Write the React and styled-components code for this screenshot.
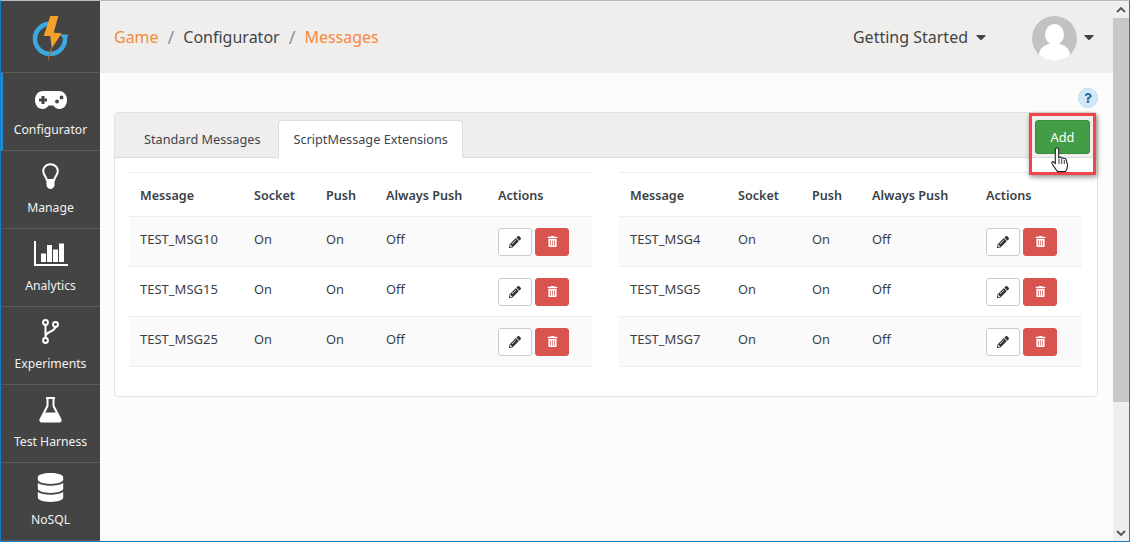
import React from "react";
import styled, { createGlobalStyle } from "styled-components";
import { FaDatabase, FaPencilAlt, FaTrashAlt, FaQuestion, FaCaretDown } from "react-icons/fa";

const leftRows = ["TEST_MSG10", "TEST_MSG15", "TEST_MSG25"];
const rightRows = ["TEST_MSG4", "TEST_MSG5", "TEST_MSG7"];
const leftCols = [114, 72, 60, 112];
const rightCols = [108, 74, 60, 114];

const GlobalStyle = createGlobalStyle`
  html, body {
    margin: 0;
    padding: 0;
    overflow: hidden;
  }
  body {
    font-family: "Noto Sans", "Open Sans", sans-serif;
    color: #3a3f47;
  }
`;

const Logo = () => (
  <svg width="40" height="46" viewBox="0 0 40 46">
    <path d="M21 8A15 15 0 1 0 34 23" fill="none" stroke="#3ba9e0" strokeWidth="4.5" />
    <path d="M29 18.500h8.500L34.500 26z" fill="#3ba9e0" />
    <path d="M20.500 32L17 44" stroke="#a86a2a" strokeWidth="1.200" />
    <path d="M19.300 0L12.700 20h6.600l1.400 12.300 10-15-8-.6L27.300 0z" fill="#f5a02a" />
  </svg>
);

const GamepadIcon = () => (
  <svg width="32" height="18" viewBox="0 0 32 18">
    <path
      d="M8 0h16c5 0 8 4 8 9s-3 9-7.500 9c-3 0-4.500-1.500-6-3.500h-5C12 16.500 10.500 18 7.500 18 3 18 0 14 0 9s3-9 8-9z"
      fill="#fff"
    />
    <path d="M6.500 7.500V5h3v2.500H12v3H9.500V13h-3v-2.500H4v-3z" fill="#444" />
    <circle cx="22" cy="10.500" r="1.900" fill="#444" />
    <circle cx="26.500" cy="6.500" r="1.900" fill="#444" />
  </svg>
);

const BulbIcon = () => (
  <svg width="17" height="26" viewBox="0 0 17 26">
    <path
      d="M8.500 1.200C4.300 1.200 1.200 4.300 1.200 8c0 3.800 3 5.500 3.600 9h7.400c.6-3.500 3.600-5.200 3.600-9 0-3.700-3.100-6.800-7.300-6.800z"
      fill="none"
      stroke="#fff"
      strokeWidth="2"
    />
    <path d="M4.500 17.500h8V22c0 2-2 4-4 4s-4-2-4-4z" fill="#fff" />
  </svg>
);

const ChartIcon = () => (
  <svg width="34" height="25" viewBox="0 0 34 25" fill="#fff">
    <path d="M0 0h2v23h32v2H0z" />
    <path d="M7 12.500h5V21H7zM13 4h5v17h-5zM19 8.500h5V21h-5zM25 2.500h5V21h-5z" />
  </svg>
);

const BranchIcon = () => (
  <svg width="17" height="25" viewBox="0 0 17 25" fill="none" stroke="#fff" strokeWidth="2">
    <circle cx="3.500" cy="3.500" r="2.400" />
    <circle cx="3.500" cy="21.500" r="2.400" />
    <circle cx="13.500" cy="5.500" r="2.400" />
    <path d="M3.500 6v13M3.500 17c1-5 9-3.500 10-9.500" />
  </svg>
);

const FlaskIcon = () => (
  <svg width="25" height="26" viewBox="0 0 25 26">
    <path d="M8 1h9" stroke="#fff" strokeWidth="2" />
    <path d="M9.500 1v8L2.500 22.500c-.5 1.200 0 2 1.200 2h17.600c1.200 0 1.700-.8 1.200-2L15.500 9V1" fill="none" stroke="#fff" strokeWidth="2" />
    <path d="M6.800 15.500h11.400l4.300 8.500c0 .8-.5 1-1.200 1H3.700c-.7 0-1.200-.2-1.200-1z" fill="#fff" />
  </svg>
);

const Cursor = () => (
  <svg width="18" height="26" viewBox="0 0 18 26">
    <path
      d="M6 1c1 0 1.700.7 1.700 1.700V10.500l1-.3c1-.2 1.500.2 1.800.8 1-.5 1.800-.2 2.200.6 1-.4 2-.1 2.400 1l1.400 5c.2 2.700-.6 5-2 7H6.500C5 22.500 3 20 1 16.500c-.5-1 .3-2.200 1.500-1.700l1.800 1.700V2.700C4.300 1.700 5 1 6 1z"
      fill="#fff"
      stroke="#222"
      strokeWidth="1.100"
    />
    <path d="M8 11.500V17M10.700 12V17M13.300 13V17" stroke="#222" strokeWidth="0.900" />
  </svg>
);

const Messages = ({ rows, cols }) => (
  <Table>
    <thead>
      <tr>
        <HeadCell $width={cols[0]}>Message</HeadCell>
        <HeadCell $width={cols[1]}>Socket</HeadCell>
        <HeadCell $width={cols[2]}>Push</HeadCell>
        <HeadCell $width={cols[3]}>Always Push</HeadCell>
        <HeadCell>Actions</HeadCell>
      </tr>
    </thead>
    <tbody>
      {rows.map((name) => (
        <Row key={name}>
          <NameCell>{name}</NameCell>
          <Cell>On</Cell>
          <Cell>On</Cell>
          <Cell>Off</Cell>
          <ActionCell>
            <Actions>
              <EditButton>
                <FaPencilAlt size={12} />
              </EditButton>
              <DeleteButton>
                <FaTrashAlt size={11} />
              </DeleteButton>
            </Actions>
          </ActionCell>
        </Row>
      ))}
    </tbody>
  </Table>
);

const navItems = [
  { label: "Configurator", icon: <GamepadIcon />, active: true },
  { label: "Manage", icon: <BulbIcon /> },
  { label: "Analytics", icon: <ChartIcon /> },
  { label: "Experiments", icon: <BranchIcon /> },
  { label: "Test Harness", icon: <FlaskIcon /> },
  { label: "NoSQL", icon: <FaDatabase size={29} /> },
];

export default function App() {
  return (
    <Page>
      <GlobalStyle />
      <Sidebar>
        <LogoBox>
          <Logo />
        </LogoBox>
        {navItems.map((item) => (
          <NavItem key={item.label} $active={item.active}>
            <NavIcon $active={item.active}>{item.icon}</NavIcon>
            <NavLabel>{item.label}</NavLabel>
          </NavItem>
        ))}
      </Sidebar>
      <Main>
        <Header>
          <Breadcrumb>
            <Crumb $accent>Game</Crumb>
            <Slash>/</Slash>
            <Crumb>Configurator</Crumb>
            <Slash>/</Slash>
            <Crumb $accent>Messages</Crumb>
          </Breadcrumb>
          <HeaderRight>
            <Dropdown>
              Getting Started <FaCaretDown size={16} />
            </Dropdown>
            <UserMenu>
              <Avatar>
                <AvatarHead />
                <AvatarBody />
              </Avatar>
              <FaCaretDown size={16} />
            </UserMenu>
          </HeaderRight>
        </Header>
        <Content>
          <HelpRow>
            <HelpBadge>
              <FaQuestion size={10} />
            </HelpBadge>
          </HelpRow>
          <Card>
            <TabBar>
              <Tab>Standard Messages</Tab>
              <Tab $active>ScriptMessage Extensions</Tab>
              <AddWrap>
                <AddButton>Add</AddButton>
                <CursorWrap>
                  <Cursor />
                </CursorWrap>
              </AddWrap>
            </TabBar>
            <Tables>
              <Messages rows={leftRows} cols={leftCols} />
              <Messages rows={rightRows} cols={rightCols} />
            </Tables>
          </Card>
        </Content>
      </Main>
      <Scrollbar>
        <ScrollArrow>
          <svg width="10" height="6" viewBox="0 0 10 6" fill="none" stroke="#555" strokeWidth="1.800">
            <path d="M1 5l4-4 4 4" />
          </svg>
        </ScrollArrow>
        <ScrollThumb />
        <ScrollArrow>
          <svg width="10" height="6" viewBox="0 0 10 6" fill="none" stroke="#555" strokeWidth="1.800">
            <path d="M1 1l4 4 4-4" />
          </svg>
        </ScrollArrow>
      </Scrollbar>
    </Page>
  );
}

const Page = styled.div`
  width: 1130px;
  height: 542px;
  box-sizing: border-box;
  display: flex;
  border-top: 1px solid #b9b9b9;
  border-left: 1px solid #1b7fc8;
  border-right: 1px solid #1b7fc8;
  border-bottom: 1px solid #1b7fc8;
  overflow: hidden;
  background: #fcfcfb;
`;

const Sidebar = styled.nav`
  width: 99px;
  flex: none;
  background: #444444;
  color: #fff;
  overflow: hidden;
`;

const LogoBox = styled.div`
  height: 72px;
  display: flex;
  align-items: flex-start;
  justify-content: center;
  padding-top: 15px;
  box-sizing: border-box;
  border-bottom: 1px solid #5c5c5c;
`;

const NavItem = styled.div`
  height: 78px;
  box-sizing: border-box;
  display: flex;
  flex-direction: column;
  align-items: center;
  border-bottom: 1px solid #5c5c5c;
  border-left: 2px solid ${(props) => (props.$active ? "#1b8fdc" : "transparent")};
  padding-right: 2px;
`;

const NavIcon = styled.div`
  height: 45px;
  display: flex;
  align-items: center;
  justify-content: center;
  padding-top: ${(props) => (props.$active ? "9px" : "4px")};
  box-sizing: border-box;
`;

const NavLabel = styled.div`
  font-size: 12.200px;
  line-height: 24px;
  color: #f2f2f2;
`;

const Main = styled.div`
  flex: 1;
  min-width: 0;
  display: flex;
  flex-direction: column;
`;

const Header = styled.header`
  height: 72px;
  flex: none;
  background: #efeeed;
  display: flex;
  align-items: center;
  justify-content: space-between;
  padding: 0 16px 0 14px;
`;

const Breadcrumb = styled.div`
  display: flex;
  align-items: center;
  gap: 9px;
  font-size: 16px;
`;

const Crumb = styled.span`
  color: ${(props) => (props.$accent ? "#f58a3c" : "#3f444c")};
`;

const Slash = styled.span`
  color: #8a93a0;
  font-size: 18px;
`;

const HeaderRight = styled.div`
  display: flex;
  align-items: center;
  gap: 43px;
`;

const Dropdown = styled.div`
  display: flex;
  align-items: center;
  gap: 5px;
  font-size: 16px;
  color: #444;
`;

const UserMenu = styled.div`
  display: flex;
  align-items: center;
  gap: 4px;
  color: #444;
`;

const Avatar = styled.div`
  width: 45px;
  height: 45px;
  margin-top: 2px;
  border-radius: 50%;
  background: #c2c2c2;
  position: relative;
  overflow: hidden;
`;

const AvatarHead = styled.div`
  position: absolute;
  left: 13px;
  top: 8px;
  width: 19px;
  height: 21px;
  border-radius: 50%;
  background: #fff;
`;

const AvatarBody = styled.div`
  position: absolute;
  left: 7px;
  top: 27px;
  width: 31px;
  height: 24px;
  border-radius: 50%;
  background: #fff;
`;

const Content = styled.main`
  flex: 1;
  padding: 0 15px 0 14px;
`;

const HelpRow = styled.div`
  height: 39px;
  display: flex;
  align-items: flex-end;
  justify-content: flex-end;
  padding-bottom: 4px;
  box-sizing: border-box;
`;

const HelpBadge = styled.div`
  width: 20px;
  height: 20px;
  box-sizing: border-box;
  border-radius: 50%;
  background: #d3e9f7;
  border: 1px solid #b5dcf3;
  color: #2a6f9e;
  display: flex;
  align-items: center;
  justify-content: center;
`;

const Card = styled.section`
  height: 285px;
  box-sizing: border-box;
  background: #fff;
  border: 1px solid #e2e2e2;
  border-radius: 4px;
`;

const TabBar = styled.div`
  height: 44px;
  background: #efeeed;
  border-bottom: 1px solid #dddddd;
  display: flex;
  align-items: flex-end;
  gap: 3px;
  padding-left: 14px;
  position: relative;
  border-radius: 4px 4px 0 0;
`;

const Tab = styled.div`
  height: 38px;
  box-sizing: border-box;
  padding: 0 14px;
  display: flex;
  align-items: center;
  font-size: 12.700px;
  color: #3f444c;
  margin-bottom: -1px;
  background: ${(props) => (props.$active ? "#fff" : "transparent")};
  border: 1px solid ${(props) => (props.$active ? "#dddddd" : "transparent")};
  border-bottom: 1px solid ${(props) => (props.$active ? "#fff" : "transparent")};
  border-radius: 4px 4px 0 0;
`;

const AddWrap = styled.div`
  position: absolute;
  right: 1px;
  top: 0;
  width: 61px;
  height: 56px;
  box-sizing: content-box;
  border: 3px solid #f0464a;
  box-shadow: 1px 2px 5px rgba(0, 0, 0, 0.45);
  display: flex;
  justify-content: center;
  align-items: flex-start;
`;

const AddButton = styled.div`
  width: 55px;
  height: 34px;
  margin-top: 4px;
  background: #439c46;
  border: 1px solid #3b8c3e;
  box-sizing: border-box;
  border-radius: 3px;
  color: #fff;
  font-size: 12.800px;
  display: flex;
  align-items: center;
  justify-content: center;
`;

const CursorWrap = styled.div`
  position: absolute;
  left: 19px;
  top: 31px;
  line-height: 0;
`;

const Tables = styled.div`
  display: flex;
  justify-content: space-between;
  padding: 14px 15px 0 14px;
`;

const Table = styled.table`
  width: 463px;
  table-layout: fixed;
  border-collapse: collapse;
  font-size: 12.800px;
  border-top: 1px solid #eeeeee;
`;

const HeadCell = styled.th`
  width: ${(props) => (props.$width ? `${props.$width}px` : "auto")};
  height: 44px;
  box-sizing: border-box;
  padding: 2px 0 0 11px;
  text-align: left;
  font-size: 12.600px;
  font-weight: 600;
  color: #3a3f47;
  border-bottom: 1px solid #eeeeee;
`;

const Row = styled.tr`
  height: 50px;
  &:nth-child(odd) {
    background: #fafafa;
  }
  border-bottom: 1px solid #eeeeee;
`;

const Cell = styled.td`
  padding: 0 0 5px 11px;
  color: #3a3f47;
`;

const NameCell = styled(Cell)`
  font-size: 13px;
`;

const ActionCell = styled.td`
  padding: 0 0 0 11px;
`;

const Actions = styled.div`
  display: flex;
  gap: 3px;
`;

const EditButton = styled.div`
  width: 34px;
  height: 28px;
  box-sizing: border-box;
  background: #fff;
  border: 1px solid #cccccc;
  border-radius: 3px;
  color: #333;
  display: flex;
  align-items: center;
  justify-content: center;
`;

const DeleteButton = styled(EditButton)`
  background: #d9534f;
  border-color: #d9534f;
  color: #fff;
`;

const Scrollbar = styled.div`
  width: 16px;
  flex: none;
  background: #efefef;
  display: flex;
  flex-direction: column;
`;

const ScrollArrow = styled.div`
  height: 17px;
  flex: none;
  display: flex;
  align-items: center;
  justify-content: center;
`;

const ScrollThumb = styled.div`
  height: 384px;
  background: #c8c8c8;
  margin-bottom: auto;
`;
